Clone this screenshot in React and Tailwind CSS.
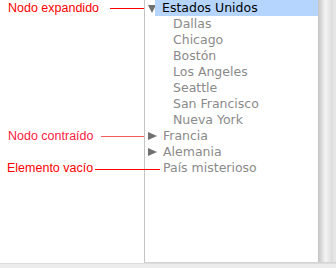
import React from "react";

const Down = () => (
  <svg width="8" height="9" viewBox="0 0 8 9" className="block shrink-0">
    <polygon points="0,1 8,1 4,9" fill="#707070" />
  </svg>
);
const Right = () => (
  <svg width="9" height="8" viewBox="0 0 9 8" className="block shrink-0">
    <polygon points="0,0 9,4 0,8" fill="#707070" />
  </svg>
);

function Label({ text, lineW, lineColor, textColor }) {
  return (
    <div className="h-4 flex items-center pl-[8px]">
      <span className="text-[12.5px] leading-4 whitespace-nowrap" style={{ color: textColor }}>{text}</span>
      <div className="flex-1" />
      <div className="h-px" style={{ width: lineW, background: lineColor }} />
    </div>
  );
}

export default function App() {
  const cities = ["Dallas", "Chicago", "Bostón", "Los Angeles", "Seattle", "San Francisco", "Nueva York"];
  return (
    <div className="w-[336px] h-[268px] bg-white flex flex-col overflow-hidden" style={{ fontFamily: '"Liberation Sans", Arial, sans-serif' }}>
      <div className="flex h-[263px]">
        <div className="w-[144px] flex flex-col">
          <Label text="Nodo expandido" lineW={34} lineColor="#ff0000" textColor="#ff0000" />
          <div className="h-[112px]" />
          <Label text="Nodo contraído" lineW={43} lineColor="#f05a5a" textColor="#ff2040" />
          <div className="h-4" />
          <div className="h-4 flex items-center pl-[7px]">
            <span className="text-[12.5px] leading-4 whitespace-nowrap text-[#ff0000]">Elemento vacío</span>
            <div className="flex-1" />
          </div>
        </div>
        <div className="flex-1 flex border-l border-[#c4c4c4] border-b border-b-[#d4d4d4] bg-white">
          <div className="flex-1 flex flex-col text-[12.5px] leading-4" style={{ fontFamily: '"DejaVu Sans", sans-serif' }}>
            <div className="h-4 flex items-center">
              <div className="w-[10px] flex pl-[3px]"><Down /></div>
              <div className="flex-1 h-4 bg-[#b5d5ff] flex items-center pl-[7px] text-black">Estados Unidos</div>
            </div>
            {cities.map((c) => (
              <div key={c} className="h-4 flex items-center pl-[28px] text-[#8a8a8a]">{c}</div>
            ))}
            <div className="h-4 flex items-center">
              <div className="w-[10px] flex pl-[3px]"><Right /></div>
              <div className="pl-[8px] text-[#8a8a8a]">Francia</div>
            </div>
            <div className="h-4 flex items-center">
              <div className="w-[10px] flex pl-[3px]"><Right /></div>
              <div className="pl-[8px] text-[#8a8a8a]">Alemania</div>
            </div>
            <div className="h-4 flex items-center relative">
              <div className="absolute left-[-50px] w-[65px] top-[9px] h-px bg-[#ff0000]" />
              <div className="pl-[18px] text-[#8a8a8a]">País misterioso</div>
            </div>
          </div>
          <div className="w-[15px] bg-linear-to-r from-[#c4c4c4] via-[#f4f4f4] to-[#dadada]" />
          <div className="w-[3px] bg-[#e6e6e6]" />
        </div>
      </div>
      <div className="flex-1 bg-[#ececec] border-t border-[#dcdcdc]" />
    </div>
  );
}
